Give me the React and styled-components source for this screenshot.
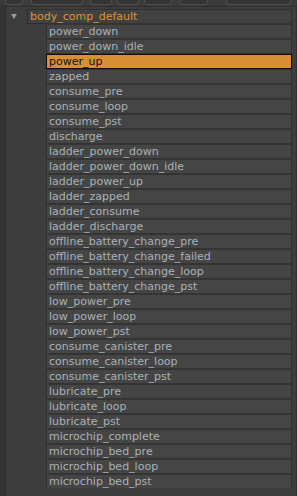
import React from "react";
import styled, { createGlobalStyle } from "styled-components";

const Global = createGlobalStyle`
  html, body { margin: 0; padding: 0; background: #3b3b3b; }
  body { font-family: "DejaVu Sans", Verdana, sans-serif; }
`;

const items = [
  "power_down", "power_down_idle", "power_up", "zapped", "consume_pre", "consume_loop",
  "consume_pst", "discharge", "ladder_power_down", "ladder_power_down_idle", "ladder_power_up",
  "ladder_zapped", "ladder_consume", "ladder_discharge", "offline_battery_change_pre",
  "offline_battery_change_failed", "offline_battery_change_loop", "offline_battery_change_pst",
  "low_power_pre", "low_power_loop", "low_power_pst", "consume_canister_pre",
  "consume_canister_loop", "consume_canister_pst", "lubricate_pre", "lubricate_loop",
  "lubricate_pst", "microchip_complete", "microchip_bed_pre", "microchip_bed_loop",
  "microchip_bed_pst",
];

const Page = styled.div`
  width: 297px;
  height: 496px;
  overflow: hidden;
  background: #3b3b3b;
  display: flex;
  flex-direction: column;
`;

const Toolbar = styled.div`
  height: 6px;
  display: flex;
  align-items: flex-start;
  background: #3a3a3a;
`;

const ToolButton = styled.div`
  margin-left: ${(p) => p.$gap}px;
  width: ${(p) => p.$w}px;
  height: 5px;
  box-sizing: border-box;
  background: #333;
  border: 1px solid #505050;
  border-top: none;
  border-radius: 0 0 4px 4px;
`;

const Body = styled.div`
  flex: 1;
  display: flex;
  min-height: 0;
`;

const LeftStrip = styled.div`
  width: 5px;
  background: #343434;
  border-right: 1px solid #2c2c2c;
`;

const Panel = styled.div`
  flex: 1;
  background: #3d3d3d;
  border-top: 1px solid #2e2e2e;
  padding-top: 2px;
  padding-right: 4px;
  display: flex;
  flex-direction: column;
  border-right: 1px solid #333;
`;

const HeaderRow = styled.div`
  display: flex;
  align-items: center;
  height: 15px;
`;

const Arrow = styled.div`
  width: 0;
  height: 0;
  margin-left: 5px;
  margin-right: 10px;
  border-left: 3.5px solid transparent;
  border-right: 3.5px solid transparent;
  border-top: 5px solid #9a9a9a;
`;

const HeaderBox = styled.div`
  flex: 1;
  height: 15px;
  box-sizing: border-box;
  background: #414141;
  border: 1px solid #2f2f2f;
  color: #de9430;
  font-size: 11px;
  line-height: 13px;
  padding-left: 2px;
  white-space: nowrap;
`;

const List = styled.div`
  margin-left: 40px;
  display: flex;
  flex-direction: column;
  gap: 2px;
  background: #343434;
  padding-top: 0px;
  margin-top: -1px;
  border-left: 1px solid #2f2f2f;
  border-right: 1px solid #2f2f2f;
`;

const Row = styled.div`
  height: 13px;
  background: ${(p) => (p.$sel ? "#d98f34" : "#454545")};
  color: ${(p) => (p.$sel ? "#111" : "#a9b1b8")};
  box-shadow: ${(p) => (p.$sel ? "0 0 0 1px #0c0c0c" : "none")};
  font-size: 11px;
  line-height: 13px;
  padding-left: 2px;
  white-space: nowrap;
  overflow: hidden;
  &:first-child { margin-top: 2px; }
`;

const buttons = [
  { gap: 5, w: 18 },
  { gap: 8, w: 52 },
  { gap: 7, w: 22 },
  { gap: 5, w: 22 },
  { gap: 5, w: 28 },
  { gap: 7, w: 29 },
  { gap: 18, w: 65 },
];

export default function App() {
  return (
    <Page>
      <Global />
      <Toolbar>
        {buttons.map((b, i) => (
          <ToolButton key={i} $gap={b.gap} $w={b.w} />
        ))}
      </Toolbar>
      <Body>
        <LeftStrip />
        <Panel>
          <HeaderRow>
            <Arrow />
            <HeaderBox>body_comp_default</HeaderBox>
          </HeaderRow>
          <List>
            {items.map((it) => (
              <Row key={it} $sel={it === "power_up"}>{it}</Row>
            ))}
          </List>
        </Panel>
      </Body>
    </Page>
  );
}
